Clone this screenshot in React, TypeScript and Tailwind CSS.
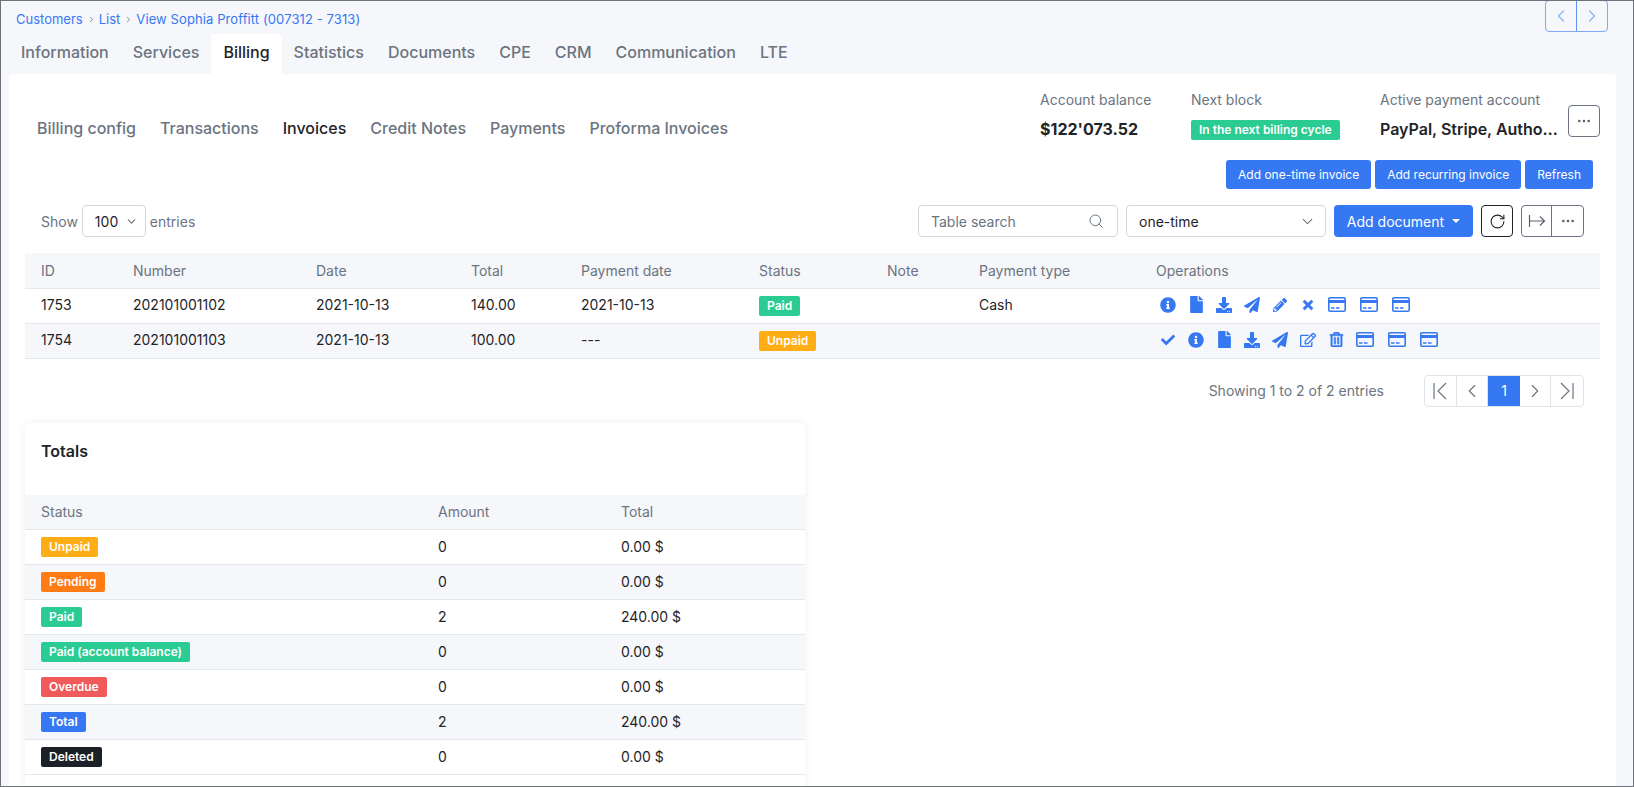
import React from 'react';
import {
  FaInfoCircle,
  FaFile,
  FaDownload,
  FaPaperPlane,
  FaPencilAlt,
  FaTimes,
  FaCheck,
  FaRegEdit,
  FaRegTrashAlt,
} from 'react-icons/fa';
import { ChevronLeft, ChevronRight, ChevronDown, Search, RotateCw, MoreHorizontal } from 'lucide-react';

const mainTabs = ['Information', 'Services', 'Billing', 'Statistics', 'Documents', 'CPE', 'CRM', 'Communication', 'LTE'];
const subTabs = ['Billing config', 'Transactions', 'Invoices', 'Credit Notes', 'Payments', 'Proforma Invoices'];

const cell = 'border-b border-[#e4e7ec] pl-[16px] pb-[2px]';

const Badge = ({ className, children }: { className: string; children: React.ReactNode }) => (
  <span className={`inline-flex h-5 items-center rounded-[2px] px-2 text-[12px] font-semibold leading-none text-white ${className}`}>
    {children}
  </span>
);

const Op = ({ icon: Icon, size = 16, bold = false }: { icon: React.ElementType; size?: number; bold?: boolean }) => (
  <span className="flex h-5 w-[28px] items-center justify-center text-[#3578f2]">
    <Icon size={size} {...(bold ? { stroke: 'currentColor', strokeWidth: 18 } : {})} />
  </span>
);

const CardIcon = () => (
  <span className="flex h-5 w-[32px] items-center justify-center text-[#3578f2]">
    <svg width="18" height="15" viewBox="0 0 18 15" fill="none">
      <rect x="0.8" y="0.8" width="16.4" height="13.4" rx="1.2" stroke="currentColor" strokeWidth="1.6" />
      <rect x="1" y="3" width="16" height="3" fill="currentColor" />
      <path d="M3 11h3.5M8 11h3.5" stroke="currentColor" strokeWidth="1.4" />
    </svg>
  </span>
);

const Cards = () => (
  <div className="-ml-[1px] flex items-center">
    <CardIcon />
    <CardIcon />
    <CardIcon />
  </div>
);

const totals = [
  { label: 'Unpaid', color: 'bg-[#ffad14]', amount: '0', total: '0.00 $' },
  { label: 'Pending', color: 'bg-[#ff7c14]', amount: '0', total: '0.00 $' },
  { label: 'Paid', color: 'bg-[#2bcc94]', amount: '2', total: '240.00 $' },
  { label: 'Paid (account balance)', color: 'bg-[#2bcc94]', amount: '0', total: '0.00 $' },
  { label: 'Overdue', color: 'bg-[#f05a5a]', amount: '0', total: '0.00 $' },
  { label: 'Total', color: 'bg-[#3578f2]', amount: '2', total: '240.00 $' },
  { label: 'Deleted', color: 'bg-[#1b2126]', amount: '0', total: '0.00 $' },
];

export default function App() {
  return (
    <div className="h-[787px] w-[1634px] overflow-hidden border border-[#6f7277] bg-[#f5f7fb] font-['Inter',sans-serif] text-[14px] text-[#1f2429]">
      <div className="flex h-[33px] items-start justify-between pl-[15px] pr-[25px]">
        <div className="flex items-center pt-[10px] text-[13px] leading-4 text-[#3578f2]">
          <span>Customers</span>
          <ChevronRight size={9} className="ml-[4px] mr-[3px] text-[#5f6b78]" />
          <span>List</span>
          <ChevronRight size={9} className="ml-[4px] mr-[3px] text-[#5f6b78]" />
          <span className="tracking-[0.1px]">View Sophia Proffitt (007312 - 7313)</span>
        </div>
        <div className="flex h-[32px] -translate-y-px rounded-[4px] border border-[#7fa9f5] text-[#8cb2f7]">
          <span className="flex w-[31px] items-center justify-center border-r border-[#5f93ef]">
            <ChevronLeft size={20} strokeWidth={1.5} />
          </span>
          <span className="flex w-[30px] items-center justify-center">
            <ChevronRight size={20} strokeWidth={1.5} />
          </span>
        </div>
      </div>

      <div className="flex h-[40px] pl-[8px]">
        {mainTabs.map((t) => (
          <div
            key={t}
            className={`flex items-center rounded-t-[4px] px-3 pb-[4px] text-[16px] font-medium ${t === 'Billing' ? 'bg-white text-[#1f2429]' : 'text-[#6b7480]'}`}
          >
            {t}
          </div>
        ))}
      </div>

      <div className="ml-[8px] mr-[17px] h-[720px] rounded-[4px] bg-white">
        <div className="flex h-[86px] items-start justify-between pr-[16px]">
          <div className="flex gap-[24px] pl-[28px] pt-[42px] text-[16px] font-medium text-[#6b7480]">
            {subTabs.map((t) => (
              <span key={t} className={t === 'Invoices' ? 'text-[#1f2429]' : ''}>
                {t}
              </span>
            ))}
          </div>
          <div className="flex items-start pt-[15px]">
            <div className="w-[151px]">
              <div className="h-[21px] text-[14px] text-[#6b7480]">Account balance</div>
              <div className="mt-[7px] text-[16px] font-bold leading-6">$122'073.52</div>
            </div>
            <div className="w-[189px]">
              <div className="h-[21px] text-[14px] text-[#6b7480]">Next block</div>
              <div className="mt-[8px]">
                <Badge className="bg-[#2bcc94]">In the next billing cycle</Badge>
              </div>
            </div>
            <div className="w-[188px]">
              <div className="h-[21px] text-[14px] text-[#6b7480]">Active payment account</div>
              <div className="mt-[7px] w-[182px] truncate text-[16px] font-semibold leading-6">PayPal, Stripe, Authorize.net</div>
            </div>
            <div className="mt-[16px] flex h-[32px] w-[32px] items-center justify-center rounded-[4px] border border-[#6b7480] text-[#5a626b]">
              <MoreHorizontal size={16} />
            </div>
          </div>
        </div>

        <div className="flex justify-end gap-[4px] pr-[23px]">
          <button className="h-[29px] rounded-[3px] bg-[#3578f2] px-3 text-[12px] text-white">Add one-time invoice</button>
          <button className="h-[29px] rounded-[3px] bg-[#3578f2] px-3 text-[12px] text-white">Add recurring invoice</button>
          <button className="h-[29px] rounded-[3px] bg-[#3578f2] px-3 text-[12px] text-white">Refresh</button>
        </div>

        <div className="mt-[16px] flex h-[32px] items-center justify-between pl-[32px] pr-[32px]">
          <div className="flex items-center text-[14px] text-[#6b7480]">
            <span>Show</span>
            <div className="mx-[4px] flex h-[32px] w-[64px] items-center justify-between rounded-[4px] border border-[#d3d6db] pl-[12px] pr-[7px] text-[#1f2429]">
              100
              <ChevronDown size={13} className="text-[#6b7480]" />
            </div>
            <span>entries</span>
          </div>
          <div className="flex items-center">
            <div className="flex h-[32px] w-[200px] items-center justify-between rounded-[4px] border border-[#d3d6db] pl-[12px] pr-[13px] text-[#6b7480]">
              Table search
              <Search size={16} strokeWidth={1.5} />
            </div>
            <div className="ml-[8px] flex h-[32px] w-[200px] items-center justify-between rounded-[4px] border border-[#d3d6db] pl-[12px] pr-[9px]">
              one-time
              <ChevronDown size={17} strokeWidth={1.5} className="text-[#6b7480]" />
            </div>
            <button className="ml-[8px] flex h-[32px] w-[139px] items-center justify-center gap-[8px] rounded-[4px] bg-[#3578f2] text-[14px] text-white">
              Add document
              <span className="h-0 w-0 border-x-[4px] border-t-[4px] border-x-transparent border-t-white" />
            </button>
            <div className="ml-[8px] flex h-[32px] w-[32px] items-center justify-center rounded-[4px] border border-[#1f2429]">
              <RotateCw size={17} strokeWidth={1.5} />
            </div>
            <div className="ml-[8px] flex h-[32px] rounded-[4px] border border-[#6b7480] text-[#5a626b]">
              <span className="flex w-[30px] items-center justify-center border-r border-[#6b7480]">
                <svg width="18" height="14" viewBox="0 0 18 14" fill="none" stroke="currentColor" strokeWidth="1.2">
                  <path d="M1.5 1v12M1.5 7h15M12 2.5 16.5 7 12 11.5" />
                </svg>
              </span>
              <span className="flex w-[31px] items-center justify-center">
                <MoreHorizontal size={16} />
              </span>
            </div>
          </div>
        </div>

        <table className="ml-[16px] mt-[16px] w-[1575px] table-fixed border-collapse">
          <colgroup>
            <col className="w-[92px]" />
            <col className="w-[183px]" />
            <col className="w-[155px]" />
            <col className="w-[110px]" />
            <col className="w-[178px]" />
            <col className="w-[128px]" />
            <col className="w-[92px]" />
            <col className="w-[177px]" />
            <col />
          </colgroup>
          <thead>
            <tr className="h-[35px] bg-[#f5f7fb] text-left text-[#6b7480]">
              {['ID', 'Number', 'Date', 'Total', 'Payment date', 'Status', 'Note', 'Payment type', 'Operations'].map((h) => (
                <th key={h} className="border-b border-[#e4e7ec] pl-[16px] font-normal">
                  {h}
                </th>
              ))}
            </tr>
          </thead>
          <tbody>
            <tr className="h-[35px]">
              <td className={cell}>1753</td>
              <td className={cell}>202101001102</td>
              <td className={cell}>2021-10-13</td>
              <td className={cell}>140.00</td>
              <td className={cell}>2021-10-13</td>
              <td className={cell}>
                <Badge className="bg-[#2bcc94]">Paid</Badge>
              </td>
              <td className={cell}></td>
              <td className={cell}>Cash</td>
              <td className="border-b border-[#e4e7ec] pb-[2px] pl-[14px]">
                <div className="flex items-center">
                  <Op icon={FaInfoCircle} />
                  <Op icon={FaFile} size={17} />
                  <Op icon={FaDownload} />
                  <Op icon={FaPaperPlane} />
                  <Op icon={FaPencilAlt} size={14} />
                  <Op icon={FaTimes} size={14} bold />
                  <Cards />
                </div>
              </td>
            </tr>
            <tr className="h-[35px] bg-[#f5f7fb]">
              <td className={cell}>1754</td>
              <td className={cell}>202101001103</td>
              <td className={cell}>2021-10-13</td>
              <td className={cell}>100.00</td>
              <td className={cell}>---</td>
              <td className={cell}>
                <Badge className="bg-[#ffad14]">Unpaid</Badge>
              </td>
              <td className={cell}></td>
              <td className={cell}></td>
              <td className="border-b border-[#e4e7ec] pb-[2px] pl-[14px]">
                <div className="flex items-center">
                  <Op icon={FaCheck} size={14} />
                  <Op icon={FaInfoCircle} />
                  <Op icon={FaFile} size={17} />
                  <Op icon={FaDownload} />
                  <Op icon={FaPaperPlane} />
                  <Op icon={FaRegEdit} />
                  <Op icon={FaRegTrashAlt} size={15} bold />
                  <Cards />
                </div>
              </td>
            </tr>
          </tbody>
        </table>

        <div className="mt-[16px] flex h-[32px] items-center justify-end pr-[32px]">
          <span className="mr-[40px] text-[#6b7480]">Showing 1 to 2 of 2 entries</span>
          <div className="flex h-[32px] w-[160px] overflow-hidden rounded-[4px] border border-[#dfe3e8] text-[#6b7480]">
            <span className="flex w-[32px] items-center justify-center border-r border-[#dfe3e8]">
              <svg width="16" height="18" viewBox="0 0 16 18" fill="none" stroke="currentColor" strokeWidth="1.2">
                <path d="M2 1v16M14 1 6 9l8 8" />
              </svg>
            </span>
            <span className="flex w-[32px] items-center justify-center border-r border-[#dfe3e8]">
              <ChevronLeft size={22} strokeWidth={1.25} />
            </span>
            <span className="flex w-[32px] items-center justify-center bg-[#3578f2] text-white">1</span>
            <span className="flex w-[32px] items-center justify-center border-r border-[#dfe3e8]">
              <ChevronRight size={22} strokeWidth={1.25} />
            </span>
            <span className="flex w-[32px] items-center justify-center">
              <svg width="16" height="18" viewBox="0 0 16 18" fill="none" stroke="currentColor" strokeWidth="1.2">
                <path d="M14 1v16M2 1l8 8-8 8" />
              </svg>
            </span>
          </div>
        </div>

        <div className="ml-[16px] mt-[16px] w-[780px] rounded-[6px] bg-white shadow-[0_0_8px_rgba(30,40,60,0.07)]">
          <div className="h-[72px] pl-[16px] pt-[16px] text-[16px] font-semibold leading-6">Totals</div>
          <table className="w-full table-fixed border-collapse">
            <colgroup>
              <col className="w-[397px]" />
              <col className="w-[183px]" />
              <col />
            </colgroup>
            <thead>
              <tr className="h-[35px] bg-[#f5f7fb] text-left text-[#6b7480]">
                <th className="border-b border-[#e4e7ec] pl-[16px] font-normal">Status</th>
                <th className="border-b border-[#e4e7ec] pl-[16px] font-normal">Amount</th>
                <th className="border-b border-[#e4e7ec] pl-[16px] font-normal">Total</th>
              </tr>
            </thead>
            <tbody>
              {totals.map((row, i) => (
                <tr key={row.label} className={`h-[35px] ${i % 2 === 1 ? 'bg-[#f5f7fb]' : ''}`}>
                  <td className={cell}>
                    <Badge className={row.color}>{row.label}</Badge>
                  </td>
                  <td className={cell}>{row.amount}</td>
                  <td className={cell}>{row.total}</td>
                </tr>
              ))}
              <tr className="h-[35px]">
                <td colSpan={3}></td>
              </tr>
            </tbody>
          </table>
        </div>
      </div>
    </div>
  );
}
